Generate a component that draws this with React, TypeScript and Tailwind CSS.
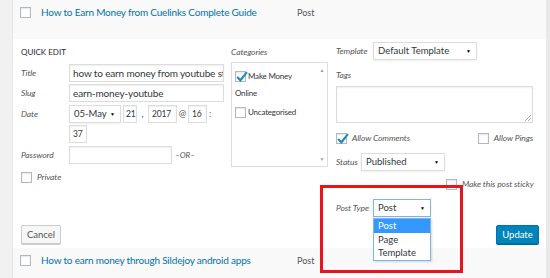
import React from 'react'

const font = { fontFamily: 'Lato, "Open Sans", sans-serif' }

function Box({ checked = false }: { checked?: boolean }) {
  return (
    <span className="relative block w-[11px] h-[11px] shrink-0 border border-[#b4b9be] bg-white shadow-[inset_0_1px_2px_rgba(0,0,0,0.1)]">
      {checked && (
        <svg viewBox="0 0 12 12" className="absolute -left-[1px] -top-[2px] w-[13px] h-[13px]">
          <path d="M2 6.5 L5 9.5 L11 2" fill="none" stroke="#1e8cbe" strokeWidth="2" />
        </svg>
      )}
    </span>
  )
}

function Label({ children, className }: { children: React.ReactNode; className?: string }) {
  return <span className={`block italic text-[8.5px] tracking-[-0.1px] leading-[12px] text-[#555] shrink-0 whitespace-nowrap ${className ?? ''}`}>{children}</span>
}

function Field({ value, className }: { value: string; className: string }) {
  return (
    <div className={`h-[18px] border border-[#ddd] bg-white shadow-[inset_0_1px_2px_rgba(0,0,0,0.07)] text-[10px] tracking-[-0.15px] text-[#32373c] leading-[16px] px-[3px] overflow-hidden whitespace-nowrap ${className}`}>
      {value}
    </div>
  )
}

function Select({ value, className, focus = false }: { value: string; className: string; focus?: boolean }) {
  return (
    <div className={`h-[18px] border ${focus ? 'border-[#7eb4ea]' : 'border-[#ddd]'} bg-white shadow-[0_1px_2px_rgba(0,0,0,0.07)] text-[9.5px] text-[#32373c] leading-[16px] pl-[4px] pr-[5px] flex items-center justify-between whitespace-nowrap ${className}`}>
      <span>{value}</span>
      <span className="text-[5px] text-black">▼</span>
    </div>
  )
}

function Row({ title }: { title: string }) {
  return (
    <div className="h-[39px] bg-[#f9f9f9] flex items-start pt-[7px] pl-[7px] shrink-0">
      <Box />
      <span className="ml-[10px] -mt-[1px] w-[256px] text-[10px] tracking-[-0.2px] leading-[13px] text-[#0073aa] whitespace-nowrap">{title}</span>
      <span className="-mt-[1px] text-[9px] leading-[13px] text-[#555]">Post</span>
    </div>
  )
}

export default function App() {
  return (
    <div className="relative w-[550px] h-[278px] flex overflow-hidden bg-white" style={font}>
      <div className="w-[13px] shrink-0 bg-[#f1f1f1] border-r border-[#e5e5e5]" />
      <div className="flex-1 flex flex-col">
        <Row title="How to Earn Money from Cuelinks Complete Guide" />

        <div className="relative z-10 h-[209px] shrink-0 bg-white flex flex-col pl-[8px] pr-[12px] pt-[3px]">
          <div className="h-[177px] flex items-start">
            {/* left column */}
            <div className="w-[203px] flex flex-col">
              <div className="h-[19px] flex items-center text-[8px] text-[#23282d] uppercase">Quick Edit</div>
              <div className="mt-[3px] flex items-center">
                <Label className="w-[48px]">Title</Label>
                <Field value="how to earn money from youtube st" className="flex-1" />
              </div>
              <div className="mt-[2px] flex items-center">
                <Label className="w-[48px]">Slug</Label>
                <Field value="earn-money-youtube" className="flex-1" />
              </div>
              <div className="mt-[3px] flex items-center text-[9px] leading-[12px] text-[#555]">
                <Label className="w-[48px]">Date</Label>
                <Select value="05-May" className="w-[52px]" />
                <Field value="21" className="ml-[2px] w-[14px] !px-[2px] !text-[8.5px]" />
                <span className="w-[11px] text-center">,</span>
                <Field value="2017" className="w-[29px] !px-[3px] !text-[8.5px]" />
                <span className="w-[11px] text-center">@</span>
                <Field value="16" className="w-[19px] !px-[3px] !text-[8.5px]" />
                <span className="w-[6px] text-center">:</span>
              </div>
              <div className="mt-[2px] flex items-center">
                <span className="w-[48px]" />
                <Field value="37" className="w-[18px] !px-[3px] !text-[8.5px]" />
              </div>
              <div className="mt-[3px] flex items-center">
                <Label className="w-[48px]">Password</Label>
                <Field value="" className="w-[103px]" />
                <span className="ml-[3px] italic text-[8px] leading-[12px] text-[#555]">–OR–</span>
              </div>
              <div className="mt-[7px] flex items-center">
                <Box />
                <Label className="ml-[5px]">Private</Label>
              </div>
            </div>

            {/* categories */}
            <div className="ml-[7px] w-[97px] flex flex-col">
              <div className="h-[19px] flex items-center"><Label>Categories</Label></div>
              <div className="mt-[1px] h-[105px] border border-[#ddd] flex">
                <div className="flex-1 flex flex-col pl-[3px] pt-[8px] text-[8px] tracking-[-0.2px] leading-[11px] text-[#32373c]">
                  <div className="flex items-center">
                    <Box checked />
                    <span className="ml-[2px]">Make Money</span>
                  </div>
                  <div className="mt-[6px]">Online</div>
                  <div className="mt-[8px] flex items-center">
                    <Box />
                    <span className="ml-[2px]">Uncategorised</span>
                  </div>
                </div>
                <div className="w-[10px] flex flex-col justify-between items-center py-[3px] text-[5px] leading-[8px] text-[#a0a0a0]">
                  <span>▲</span>
                  <span>▼</span>
                </div>
              </div>
            </div>

            {/* right column */}
            <div className="ml-[8px] w-[197px] flex flex-col">
              <div className="flex items-center">
                <Label className="w-[37px]">Template</Label>
                <Select value="Default Template" className="w-[104px]" />
              </div>
              <div className="mt-[9px] flex">
                <Label>Tags</Label>
              </div>
              <div className="mt-[5px] relative h-[37px] border border-[#ddd] shadow-[inset_0_1px_2px_rgba(0,0,0,0.07)]">
                <svg viewBox="0 0 6 6" className="absolute right-[1px] bottom-[1px] w-[6px] h-[6px]">
                  <path d="M6 0 L0 6 M6 3 L3 6" stroke="#999" strokeWidth="0.8" />
                </svg>
              </div>
              <div className="mt-[9px] flex items-center">
                <Box checked />
                <Label className="ml-[5px]">Allow Comments</Label>
                <span className="ml-auto flex"><Box /></span>
                <Label className="ml-[5px]">Allow Pings</Label>
              </div>
              <div className="mt-[9px] flex items-center">
                <Label className="w-[25px]">Status</Label>
                <Select value="Published" className="w-[84px]" />
              </div>
              <div className="mt-[7px] flex items-center pl-[110px]">
                <Box />
                <Label className="ml-[5px]">Make this post sticky</Label>
              </div>
              <div className="mt-[9px] flex items-center">
                <Label className="w-[37px]">Post Type</Label>
                <div className="relative">
                  <Select value="Post" className="w-[58px]" focus />
                  <div className="absolute z-10 left-0 top-[19px] w-[58px] border border-[#7eb4ea] bg-white text-[9.5px] text-[#32373c] leading-[13.5px] shadow-[1px_1px_2px_rgba(0,0,0,0.15)]">
                    <div className="bg-[#3399ff] text-white px-[4px]">Post</div>
                    <div className="px-[4px]">Page</div>
                    <div className="px-[4px]">Template</div>
                  </div>
                </div>
              </div>
            </div>
          </div>

          <div className="mt-[6px] flex items-center justify-between">
            <button className="h-[19px] w-[40px] border border-[#ccc] bg-[#f7f7f7] rounded-[2px] shadow-[0_1px_0_#ccc] text-[9.5px] text-[#555] leading-none">Cancel</button>
            <button className="mr-[-5px] h-[19px] w-[43px] border border-[#0073aa] bg-[#0085ba] rounded-[2px] shadow-[0_1px_0_#006799] text-[9.5px] text-white leading-none">Update</button>
          </div>
        </div>

        <Row title="How to earn money through Sildejoy android apps" />
      </div>
      <div className="w-[4px] shrink-0 bg-[#e9e9e9]" />

      <div className="absolute z-20 left-[320px] top-[185px] w-[143px] h-[88px] border-[3px] border-[#e8141c] pointer-events-none" />
    </div>
  )
}
